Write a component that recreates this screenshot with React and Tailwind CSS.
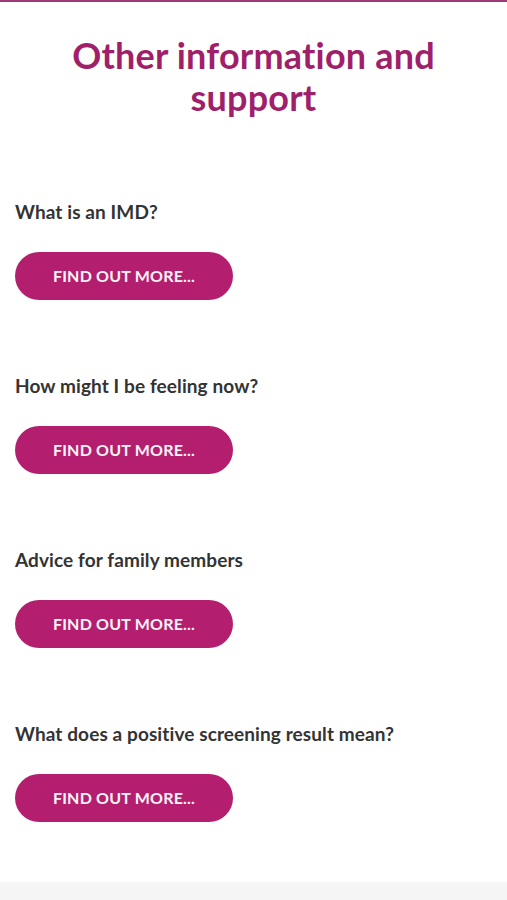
export default function App() {
  const items = [
    "What is an IMD?",
    "How might I be feeling now?",
    "Advice for family members",
    "What does a positive screening result mean?",
  ];
  return (
    <div className="min-h-[900px] bg-white flex flex-col [font-variant-ligatures:none]" style={{ fontFamily: "Lato, 'Open Sans', sans-serif" }}>
      <div className="h-[2px] bg-[#9c3a7c]" />
      <div className="flex-1 px-[15px]">
        <h1 className="pt-[32px] text-center text-[36px] leading-[42px] font-bold tracking-[0.2px] text-[#a01f6b] px-8">
          Other information and support
        </h1>
        <div className="flex flex-col pt-[82px] pb-[60px] gap-[74px]">
          {items.map((q) => (
            <div key={q} className="flex flex-col gap-[28px]">
              <p className="text-[19px] leading-[24px] font-bold tracking-[0.1px] text-[#333333]">{q}</p>
              <button className="w-[218px] h-[48px] rounded-full bg-[#b31f6e] text-[#fdf3f8] text-[16px] font-bold tracking-[0.2px] uppercase">
                Find out more...
              </button>
            </div>
          ))}
        </div>
      </div>
      <div className="h-[18px] bg-[#f5f5f5]" />
    </div>
  );
}
